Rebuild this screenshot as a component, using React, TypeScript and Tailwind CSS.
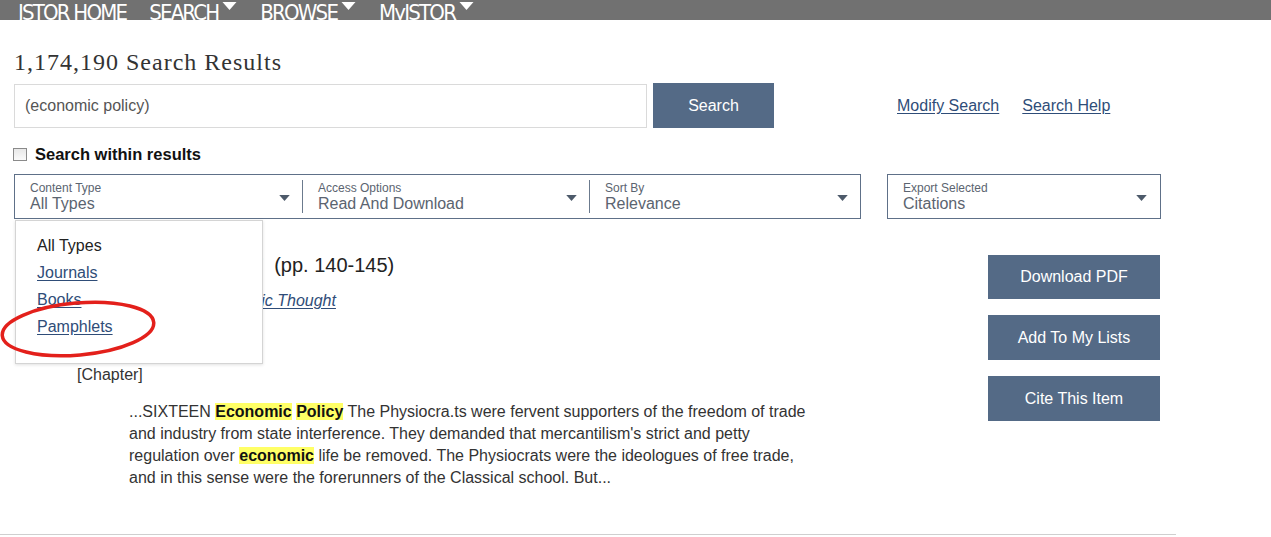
import React from 'react'

const sans = { fontFamily: '"Liberation Sans", Arial, sans-serif' }

function Caret({ className = '' }: { className?: string }) {
	return (
		<svg width="14" height="8" viewBox="0 0 14 8" className={className}>
			<path d="M0 0 H14 L7 8 Z" fill="currentColor" />
		</svg>
	)
}

function NavItem({ label, menu }: { label: string, menu?: boolean }) {
	return (
		<div className="flex items-end gap-[4px]">
			<span className="text-[22px] leading-none text-white tracking-[-1.8px] mb-[-4px]">{label}</span>
			{menu && <Caret className="text-white mb-[10px] w-[15px] h-[8px]" />}
		</div>
	)
}

function Select({ label, value, className = '' }: { label: string, value: string, className?: string }) {
	return (
		<div className={`flex items-center justify-between pl-[15px] pr-[12px] ${className}`}>
			<div className="flex flex-col pt-[2px]">
				<span className="text-[12px] leading-[13px] text-[#5b6470]">{label}</span>
				<span className="text-[16px] leading-[18px] text-[#5b6470]">{value}</span>
			</div>
			<Caret className="text-[#4d5a6a] w-[11px] h-[6px] mt-[2px]" />
		</div>
	)
}

function Hl({ children }: { children: React.ReactNode }) {
	return <b className="bg-[#ffff66] text-[#111]">{children}</b>
}

export default function App() {
	return (
		<div className="relative w-[1271px] h-[537px] overflow-hidden bg-white text-[#333]" style={sans}>
			<nav
				className="h-[20px] bg-[#717171] flex items-end gap-[23px] pl-[18px] overflow-hidden"
				style={{ fontFamily: '"Liberation Sans Narrow", "DejaVu Sans Condensed", "Liberation Sans", sans-serif' }}
			>
				<NavItem label="JSTOR HOME" />
				<NavItem label="SEARCH" menu />
				<NavItem label="BROWSE" menu />
				<NavItem label="MyJSTOR" menu />
			</nav>

			<main className="pl-[14px]">
				<h1 className="mt-[28px] text-[24px] leading-[28px] tracking-[1px] text-[#333]" style={{ fontFamily: '"Liberation Serif", Georgia, serif' }}>
					1,174,190 Search Results
				</h1>

				<div className="mt-[7px] flex items-center">
					<div className="w-[633px] h-[44px] border border-[#dadada] flex items-center pl-[10px] text-[16px] text-[#555]">
						(economic policy)
					</div>
					<button className="ml-[6px] w-[121px] h-[45px] bg-[#546a86] text-white text-[16px]">Search</button>
					<a href="#" className="ml-[123px] text-[16px] text-[#2f4d78] underline underline-offset-2">Modify Search</a>
					<a href="#" className="ml-[23px] text-[16px] text-[#2f4d78] underline underline-offset-2">Search Help</a>
				</div>

				<label className="mt-[16px] flex items-center gap-[8px] -ml-[1px]">
					<span className="w-[14px] h-[13px] border border-[#8a8a8a] bg-gradient-to-b from-[#e8e8e8] to-[#fafafa]" />
					<span className="text-[16.5px] leading-[20px] font-bold text-[#111]">Search within results</span>
				</label>

				<div className="mt-[10px] flex items-stretch">
					<div className="w-[847px] h-[45px] border border-[#5e7088] flex items-center">
						<Select label="Content Type" value="All Types" className="w-[287px]" />
						<div className="w-px h-[33px] bg-[#6b7a8d]" />
						<Select label="Access Options" value="Read And Download" className="w-[286px]" />
						<div className="w-px h-[33px] bg-[#6b7a8d]" />
						<Select label="Sort By" value="Relevance" className="flex-1" />
					</div>
					<div className="ml-[26px] w-[274px] h-[45px] border border-[#5e7088] flex items-center">
						<Select label="Export Selected" value="Citations" className="flex-1 pr-[13px]" />
					</div>
				</div>

				<div className="flex mt-[35px]">
					<div className="w-[974px]">
						<div className="pl-[63px] flex flex-col">
							<div className="ml-[26px] text-[20px] leading-[22px] text-[#222]">
								&ldquo;Economic Policy&rdquo; &nbsp;(pp. 140-145)
							</div>
							<a href="#" className="ml-[39px] mt-[16px] text-[16px] italic text-[#2f4d78] underline underline-offset-2 leading-[18px] self-start">
								A History of Economic Thought
							</a>
							<div className="h-[56px]" />
							<div className="text-[16px] leading-[18px] text-[#333]">[Chapter]</div>
						</div>
						<p className="mt-[17px] ml-[115px] w-[690px] text-[16px] leading-[22px] text-[#333]">
							...SIXTEEN <Hl>Economic</Hl> <Hl>Policy</Hl> The Physiocra.ts were fervent supporters of the freedom of trade and industry from state interference. They demanded that mercantilism's strict and petty regulation over <Hl>economic</Hl> life be removed. The Physiocrats were the ideologues of free trade, and in this sense were the forerunners of the Classical school. But...
						</p>
					</div>
					<div className="flex flex-col gap-[16px] mt-[1px]">
						<button className="w-[172px] h-[44px] bg-[#546a86] text-white text-[16px]">Download PDF</button>
						<button className="w-[172px] h-[45px] bg-[#546a86] text-white text-[16px]">Add To My Lists</button>
						<button className="w-[172px] h-[45px] bg-[#546a86] text-white text-[16px]">Cite This Item</button>
					</div>
				</div>
			</main>

			<div className="absolute left-0 top-[534px] w-[1176px] h-px bg-[#cfcfcf]" />

			{/* open content type menu */}
			<div className="absolute left-[15px] top-[220px] w-[248px] h-[144px] bg-white border border-[#d4d4d4] shadow-[0_1px_3px_rgba(0,0,0,0.12)] pl-[21px] pt-[16px] flex flex-col gap-[9px] text-[16px] leading-[18px]">
				<span className="text-[#222]">All Types</span>
				<a href="#" className="text-[#2f4d78] underline underline-offset-2 self-start">Journals</a>
				<a href="#" className="text-[#2f4d78] underline underline-offset-2 self-start">Books</a>
				<a href="#" className="text-[#2f4d78] underline underline-offset-2 self-start">Pamphlets</a>
			</div>

			{/* red annotation ring */}
			<svg className="absolute left-0 top-[296px]" width="170" height="66" viewBox="0 0 170 66">
				<ellipse cx="78" cy="33" rx="76" ry="26" transform="rotate(-5 78 33)" fill="none" stroke="#e3201b" strokeWidth="3.5" />
			</svg>
		</div>
	)
}
